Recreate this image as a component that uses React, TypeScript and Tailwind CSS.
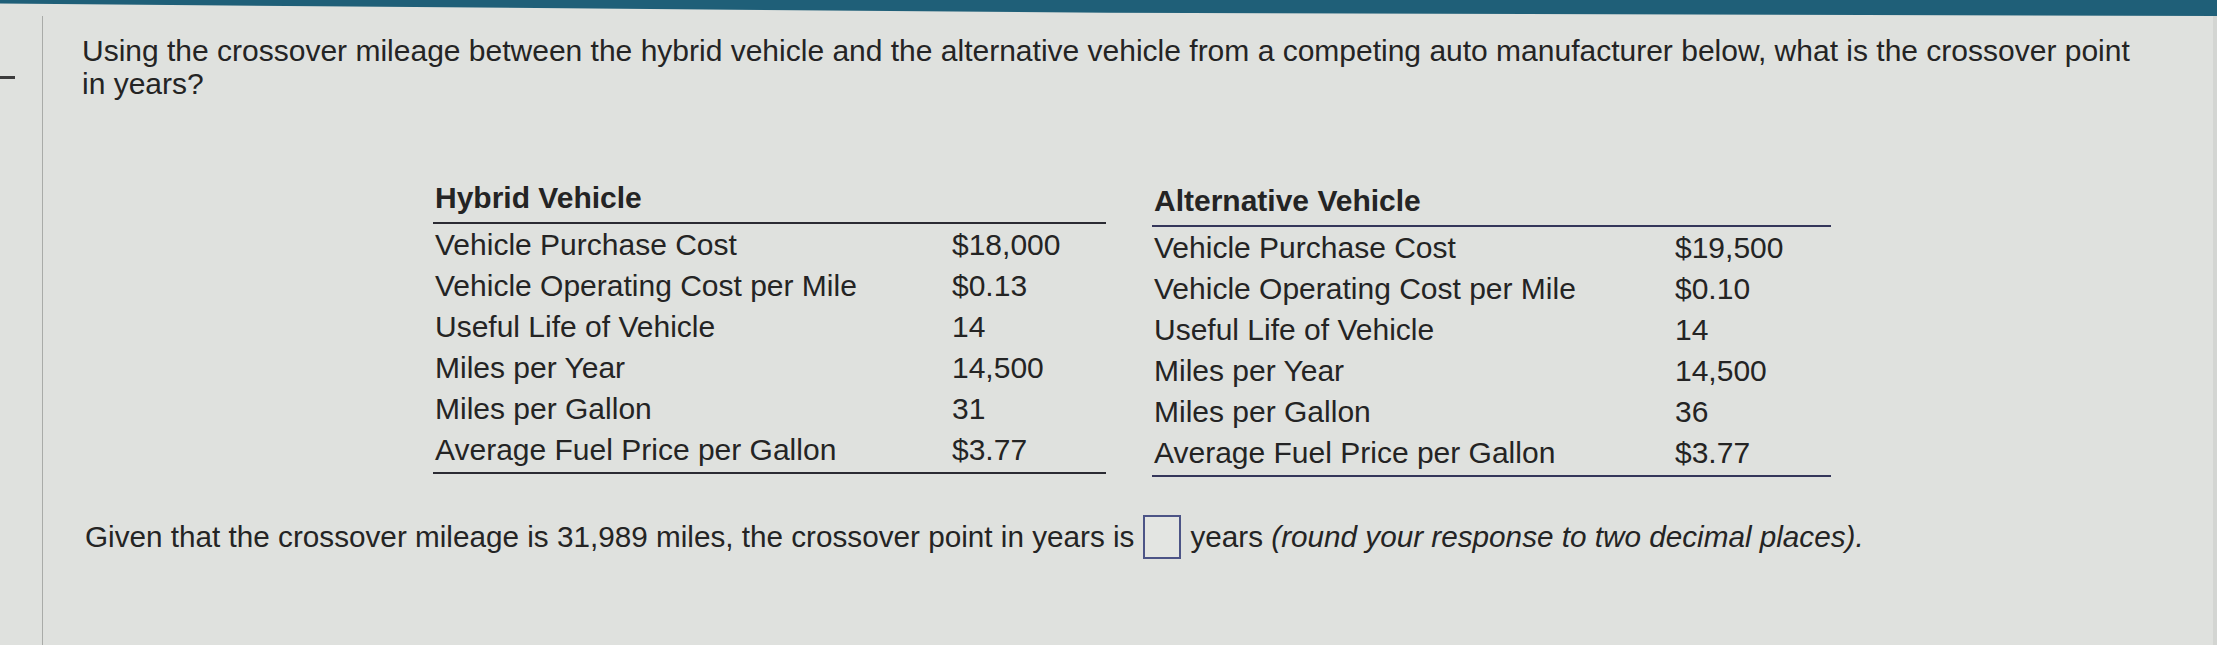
import React from 'react';

type Row = { label: string; value: string };

// Data for the two comparison tables
const hybridRows: Row[] = [
  { label: 'Vehicle Purchase Cost', value: '$18,000' },
  { label: 'Vehicle Operating Cost per Mile', value: '$0.13' },
  { label: 'Useful Life of Vehicle', value: '14' },
  { label: 'Miles per Year', value: '14,500' },
  { label: 'Miles per Gallon', value: '31' },
  { label: 'Average Fuel Price per Gallon', value: '$3.77' },
];

const alternativeRows: Row[] = [
  { label: 'Vehicle Purchase Cost', value: '$19,500' },
  { label: 'Vehicle Operating Cost per Mile', value: '$0.10' },
  { label: 'Useful Life of Vehicle', value: '14' },
  { label: 'Miles per Year', value: '14,500' },
  { label: 'Miles per Gallon', value: '36' },
  { label: 'Average Fuel Price per Gallon', value: '$3.77' },
];

function VehicleTable({ title, rows, wide }: { title: string; rows: Row[]; wide?: boolean }) {
  return (
    <div className={wide ? 'w-[679px] mt-[3px]' : 'w-[673px]'}>
      <div
        className={
          'pl-[2px] pb-[4px] font-bold leading-[41px] border-b-2 ' +
          (wide ? 'border-[#34365a]' : 'border-[#2b2b33]')
        }
      >
        {title}
      </div>
      <div
        className={
          'grid pb-[2px] border-b-2 ' +
          (wide
            ? 'grid-cols-[523px_1fr] border-[#34365a]'
            : 'grid-cols-[519px_1fr] border-[#2b2b33]')
        }
      >
        {rows.map((row) => (
          <React.Fragment key={row.label}>
            <div className="pl-[2px] leading-[41px] whitespace-nowrap">{row.label}</div>
            <div className="leading-[41px]">{row.value}</div>
          </React.Fragment>
        ))}
      </div>
    </div>
  );
}

export default function App() {
  return (
    <div className="min-h-[645px] w-full flex flex-col bg-[#dfe1de] text-[#242424] font-['Liberation_Sans',Arial,sans-serif] text-[30px]">
      {/* top header strip (slanted in the photo) */}
      <div className="h-[16px] bg-[#1f5f78] [clip-path:polygon(0_0,100%_0,100%_100%,50%_80%,0_22%)]" />

      <div className="flex flex-1">
        {/* left rail */}
        <aside className="w-[43px] shrink-0 border-r border-[#a9aba8] pt-[60px]">
          <div className="h-[3px] w-[15px] bg-[#3c3c3c]" />
        </aside>

        <main className="flex-1 pl-[39px] pt-[18px] border-r-4 border-[#d3d5d2]">
          <p className="max-w-[2062px] leading-[33px]">
            Using the crossover mileage between the hybrid vehicle and the alternative vehicle from a competing auto
            manufacturer below, what is the crossover point in years?
          </p>

          <div className="mt-[77px] ml-[351px] flex items-start gap-[46px]">
            <VehicleTable title="Hybrid Vehicle" rows={hybridRows} />
            <VehicleTable title="Alternative Vehicle" rows={alternativeRows} wide />
          </div>

          <div className="mt-[38px] ml-[3px] flex items-center h-[44px] text-[29.7px]">
            <span>Given that the crossover mileage is 31,989 miles, the crossover point in years is</span>
            <span className="mx-[9px] inline-block w-[38px] h-[44px] border-2 border-[#4c5486] bg-[#e3e5e2]" />
            <span>
              years <em>(round your response to two decimal places).</em>
            </span>
          </div>
        </main>
      </div>
    </div>
  );
}
